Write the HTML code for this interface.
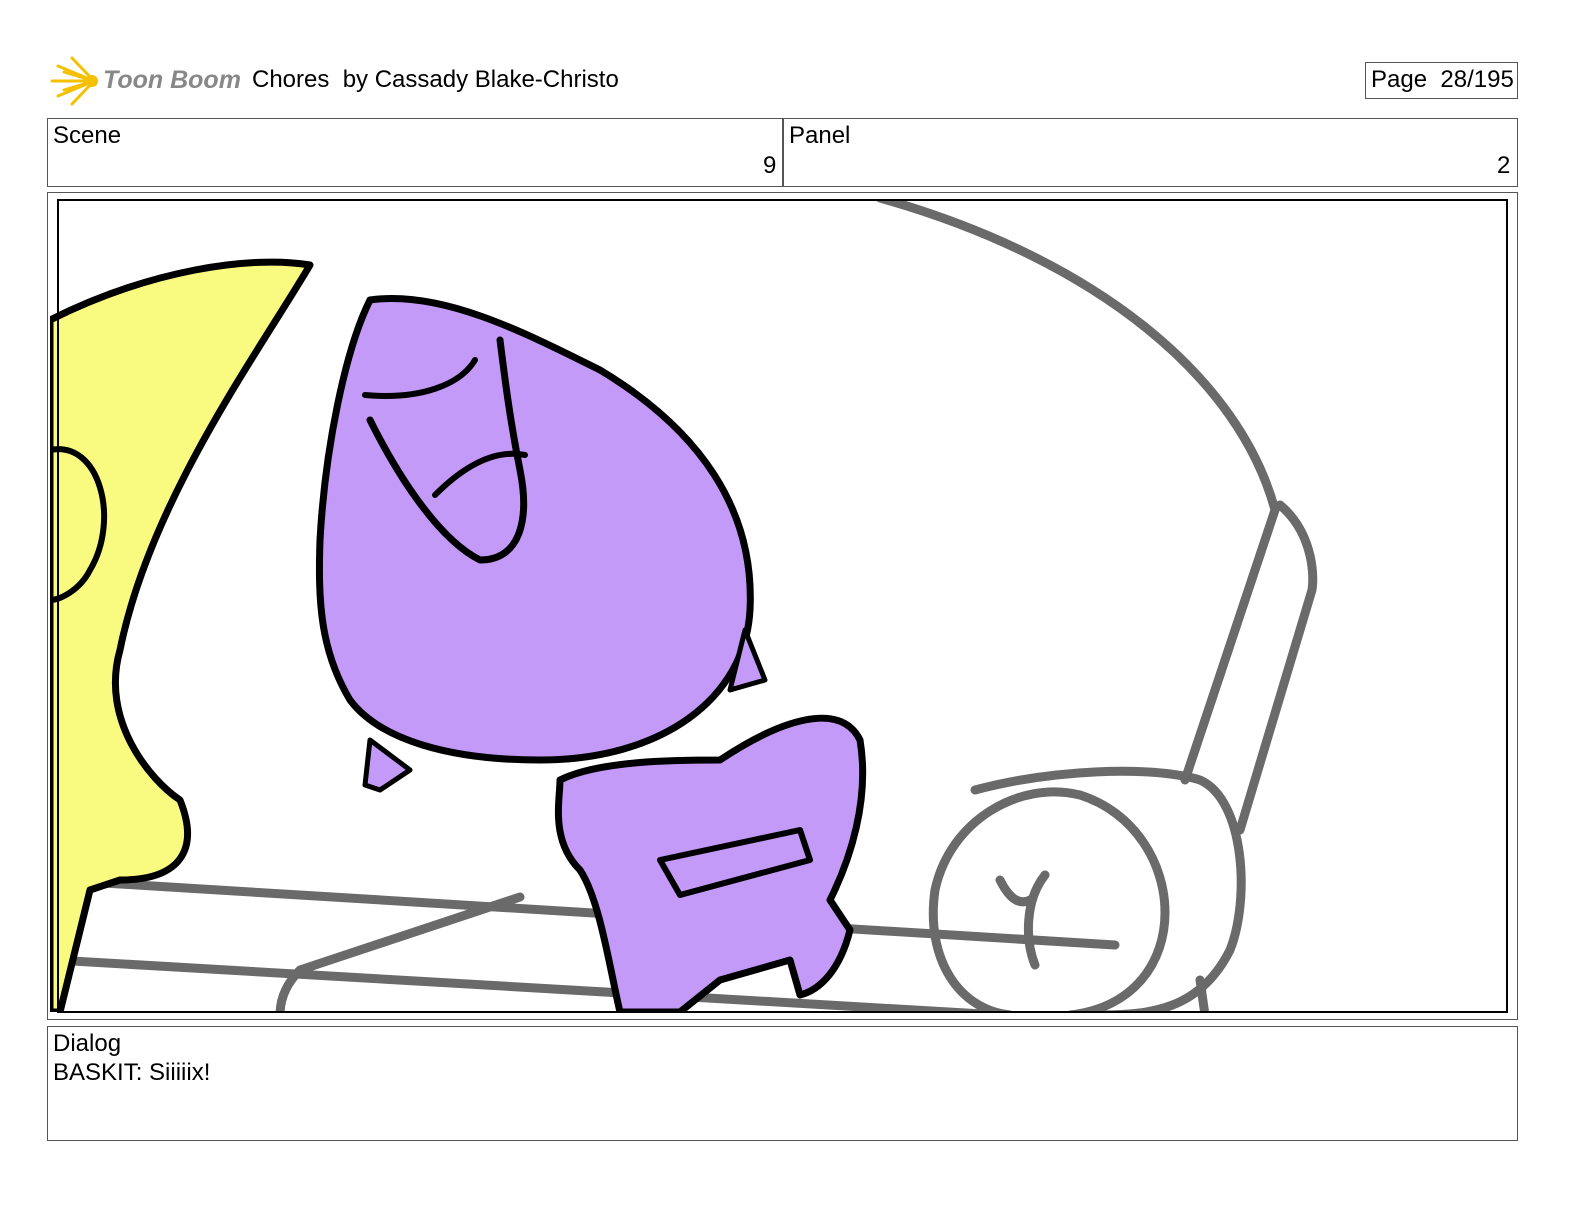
<!DOCTYPE html>
<html><head><style>
body{margin:0;width:1584px;height:1224px;background:#fff;position:relative;font-family:"Liberation Sans",sans-serif;overflow:hidden}
.t{position:absolute;font-size:24px;color:#000;white-space:nowrap}
.b{position:absolute;border:1px solid #555;box-sizing:border-box}
</style></head><body>
<svg style="position:absolute;left:50px;top:56px" width="50" height="50" viewBox="0 0 50 50">
<g stroke="#f5c000" stroke-width="3" stroke-linecap="round">
<line x1="44" y1="25" x2="2" y2="25"/><line x1="44" y1="25" x2="8" y2="10"/><line x1="44" y1="25" x2="8" y2="40"/>
<line x1="44" y1="25" x2="22" y2="2"/><line x1="44" y1="25" x2="22" y2="48"/><line x1="44" y1="25" x2="14" y2="16"/><line x1="44" y1="25" x2="14" y2="34"/></g>
<circle cx="42" cy="25" r="6" fill="#f5c000"/></svg>
<div class="t" style="left:103px;top:66px;font-style:italic;font-weight:bold;color:#888;font-size:25px">Toon Boom</div>
<div class="t" style="left:252px;top:66px">Chores&nbsp; by Cassady Blake-Christo</div>
<div class="b" style="left:1365px;top:62px;width:153px;height:37px"></div>
<div class="t" style="left:1371px;top:66px">Page&nbsp; 28/195</div>
<div class="b" style="left:47px;top:118px;width:1471px;height:69px"></div>
<div class="b" style="left:782px;top:118px;width:1px;height:69px"></div>
<div class="t" style="left:53px;top:122px">Scene</div>
<div class="t" style="left:763px;top:152px">9</div>
<div class="t" style="left:789px;top:122px">Panel</div>
<div class="t" style="left:1497px;top:152px">2</div>
<div class="b" style="left:47px;top:192px;width:1471px;height:828px"></div>
<svg style="position:absolute;left:0;top:0" width="1584" height="1224">
<defs><clipPath id="c"><rect x="50" y="200" width="1457" height="812"/></clipPath></defs>
<g clip-path="url(#c)" stroke-linecap="round" stroke-linejoin="round" fill="none">
<g stroke="#6a6a6a" stroke-width="9">
<path d="M880 198 C1100 260 1240 380 1275 510"/>
<path d="M1275 510 L1185 780"/><path d="M1280 505 C1310 530 1315 570 1312 590 L1240 830"/>
<path d="M975 790 C1050 770 1150 765 1200 780 C1245 800 1250 900 1230 950 C1200 1010 1150 1015 1100 1015"/>
<path d="M1070 1015 C1200 1000 1190 830 1080 795 C1020 780 950 820 935 890 C925 960 960 1010 1010 1015"/>
<path d="M55 880 L1115 945"/><path d="M55 960 L1000 1015"/>
<path d="M520 897 L300 970 C285 985 280 1000 280 1015"/>
<path d="M1000 880 C1010 900 1020 905 1030 900"/><path d="M1045 875 C1025 900 1025 940 1035 965"/>
<path d="M1200 980 L1205 1015"/>
</g>
<path d="M50 320 C150 270 250 255 310 265 C260 350 150 500 120 650 C100 720 150 780 180 800 C200 850 180 880 120 880 L90 890 L60 1012 L50 1012 Z" fill="#f9fa80" stroke="#000" stroke-width="7"/>
<path d="M50 450 C100 440 120 520 90 570 C80 590 60 600 50 600" stroke="#000" stroke-width="6"/>
<path d="M560 780 C600 760 680 760 720 760 C780 720 840 700 860 740 C870 800 850 860 830 900 L850 930 C840 970 820 990 800 995 L790 960 L720 980 L680 1012 L620 1012 C610 970 600 900 580 870 C550 840 560 800 560 780 Z" fill="#c49af8" stroke="#000" stroke-width="7"/>
<path d="M370 300 C440 290 520 330 600 370 C700 430 755 510 750 610 C745 700 660 760 540 760 C450 760 380 740 350 700 C320 650 318 600 320 540 C325 450 345 350 370 300 Z" fill="#c49af8" stroke="#000" stroke-width="7"/>
<path d="M370 740 L365 785 L380 790 L410 770 Z" fill="#c49af8" stroke="#000" stroke-width="5"/>
<path d="M745 630 L765 680 L730 690 Z" fill="#c49af8" stroke="#000" stroke-width="5"/>
<path d="M370 420 C400 480 440 540 480 560 C520 560 530 520 520 470 C510 420 505 380 500 340" stroke="#000" stroke-width="7"/>
<path d="M435 495 C470 460 500 450 525 455" stroke="#000" stroke-width="6"/>
<path d="M365 395 C420 400 460 385 475 360" stroke="#000" stroke-width="6"/>
<path d="M660 860 L800 830 L810 860 L680 895 Z" stroke="#000" stroke-width="6"/>
</g>
<rect x="58" y="200" width="1449" height="812" fill="none" stroke="#000" stroke-width="2"/>
</svg>
<div class="b" style="left:47px;top:1026px;width:1471px;height:115px"></div>
<div class="t" style="left:53px;top:1030px">Dialog</div>
<div class="t" style="left:53px;top:1059px">BASKIT: Siiiiix!</div>
</body></html>
